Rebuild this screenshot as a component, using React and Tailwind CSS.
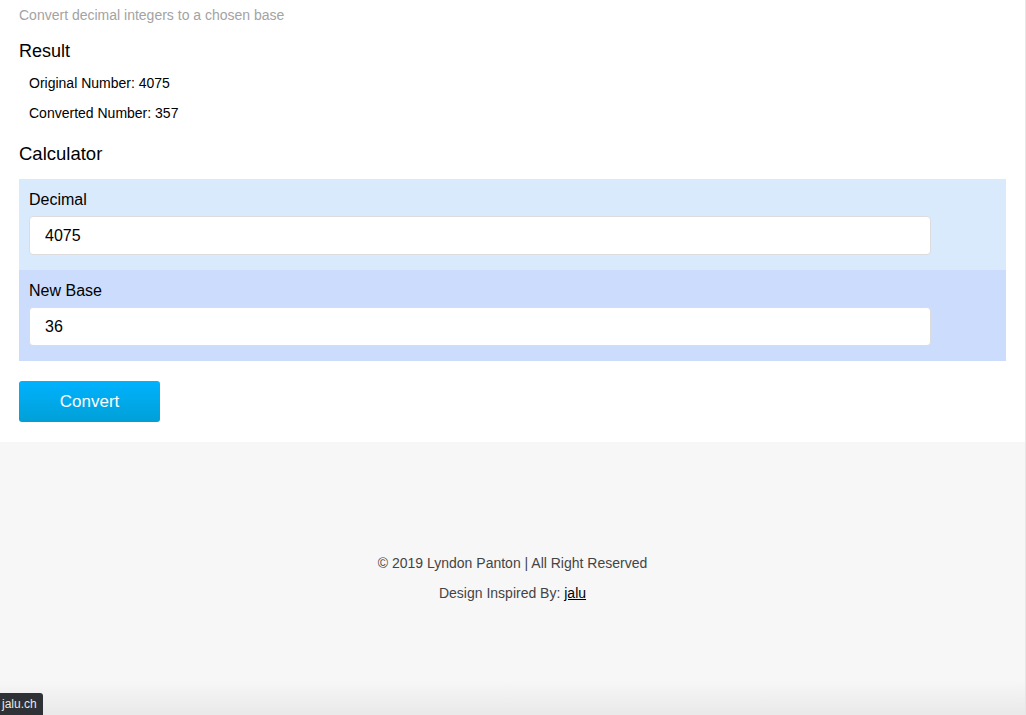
import { useState } from "react";

function toBase(n, base) {
  const num = parseInt(n, 10);
  const b = parseInt(base, 10);
  if (isNaN(num) || isNaN(b) || b < 2 || b > 36) return "";
  return num.toString(b).toUpperCase();
}

function App() {
  const [decimal, setDecimal] = useState("4075");
  const [base, setBase] = useState("36");
  const [result, setResult] = useState({ original: "4075", converted: "357" });

  const handleConvert = () => {
    setResult({ original: decimal, converted: toBase(decimal, base) });
  };

  return (
    <div
      className="min-h-[715px] flex flex-col border-r border-[#e6e6e6] relative"
      style={{ fontFamily: '"Liberation Sans", Arial, sans-serif' }}
    >
      {/* main */}
      <div className="bg-white px-[19px] pb-[20px]">
        <p className="text-[14px] text-[#a3a3a3] leading-[16px] pt-[7px]">
          Convert decimal integers to a chosen base
        </p>

        <h2 className="text-[18px] text-black mt-[17px] leading-[22px]">Result</h2>
        <div className="pl-[10px] text-[14px] text-black">
          <p className="mt-[13px] leading-[16px]">Original Number: {result.original}</p>
          <p className="mt-[14px] leading-[16px]">Converted Number: {result.converted}</p>
        </div>

        <h2 className="text-[18.5px] text-black mt-[22px] leading-[22px]">Calculator</h2>

        <div className="mt-[14px]">
          <div className="bg-[#d9eafd] pl-[10px] pr-[75px] pt-[11px] pb-[15px]">
            <label className="block text-[16px] text-black leading-[20px] mb-[6px]">Decimal</label>
            <input
              value={decimal}
              onChange={(e) => setDecimal(e.target.value)}
              className="w-full h-[39px] bg-white border border-[#dcdcdc] rounded-[4px] px-[15px] text-[16px] text-black outline-none"
            />
          </div>
          <div className="bg-[#cbdcfd] pl-[10px] pr-[75px] pt-[11px] pb-[15px]">
            <label className="block text-[16px] text-black leading-[20px] mb-[6px]">New Base</label>
            <input
              value={base}
              onChange={(e) => setBase(e.target.value)}
              className="w-full h-[39px] bg-white border border-[#dcdcdc] rounded-[4px] px-[15px] text-[16px] text-black outline-none"
            />
          </div>
        </div>

        <button
          onClick={handleConvert}
          className="mt-[20px] w-[141px] h-[41px] rounded-[3px] bg-gradient-to-b from-[#00b2ff] to-[#00a0d6] text-white text-[17px]"
        >
          Convert
        </button>
      </div>

      {/* footer */}
      <footer className="flex-1 bg-[#f7f7f7] flex flex-col items-center pt-[113px] text-[14px] text-[#444]">
        <p className="leading-[16px]">© 2019 Lyndon Panton | All Right Reserved</p>
        <p className="leading-[16px] mt-[14px]">
          Design Inspired By: <a href="#" className="text-black underline">jalu</a>
        </p>
      </footer>

      {/* bottom shade + status bubble */}
      <div className="absolute left-0 right-0 bottom-0 h-[35px] bg-gradient-to-b from-[#f7f7f7]/0 to-[#e9e9e9] pointer-events-none" />
      <div className="absolute left-0 bottom-0 h-[22px] w-[43px] bg-[#2e3135] rounded-tr-[3px] text-[#e8e8e8] text-[12px] leading-[22px] pl-[2px]">
        jalu.ch
      </div>
    </div>
  );
}

export default App;
